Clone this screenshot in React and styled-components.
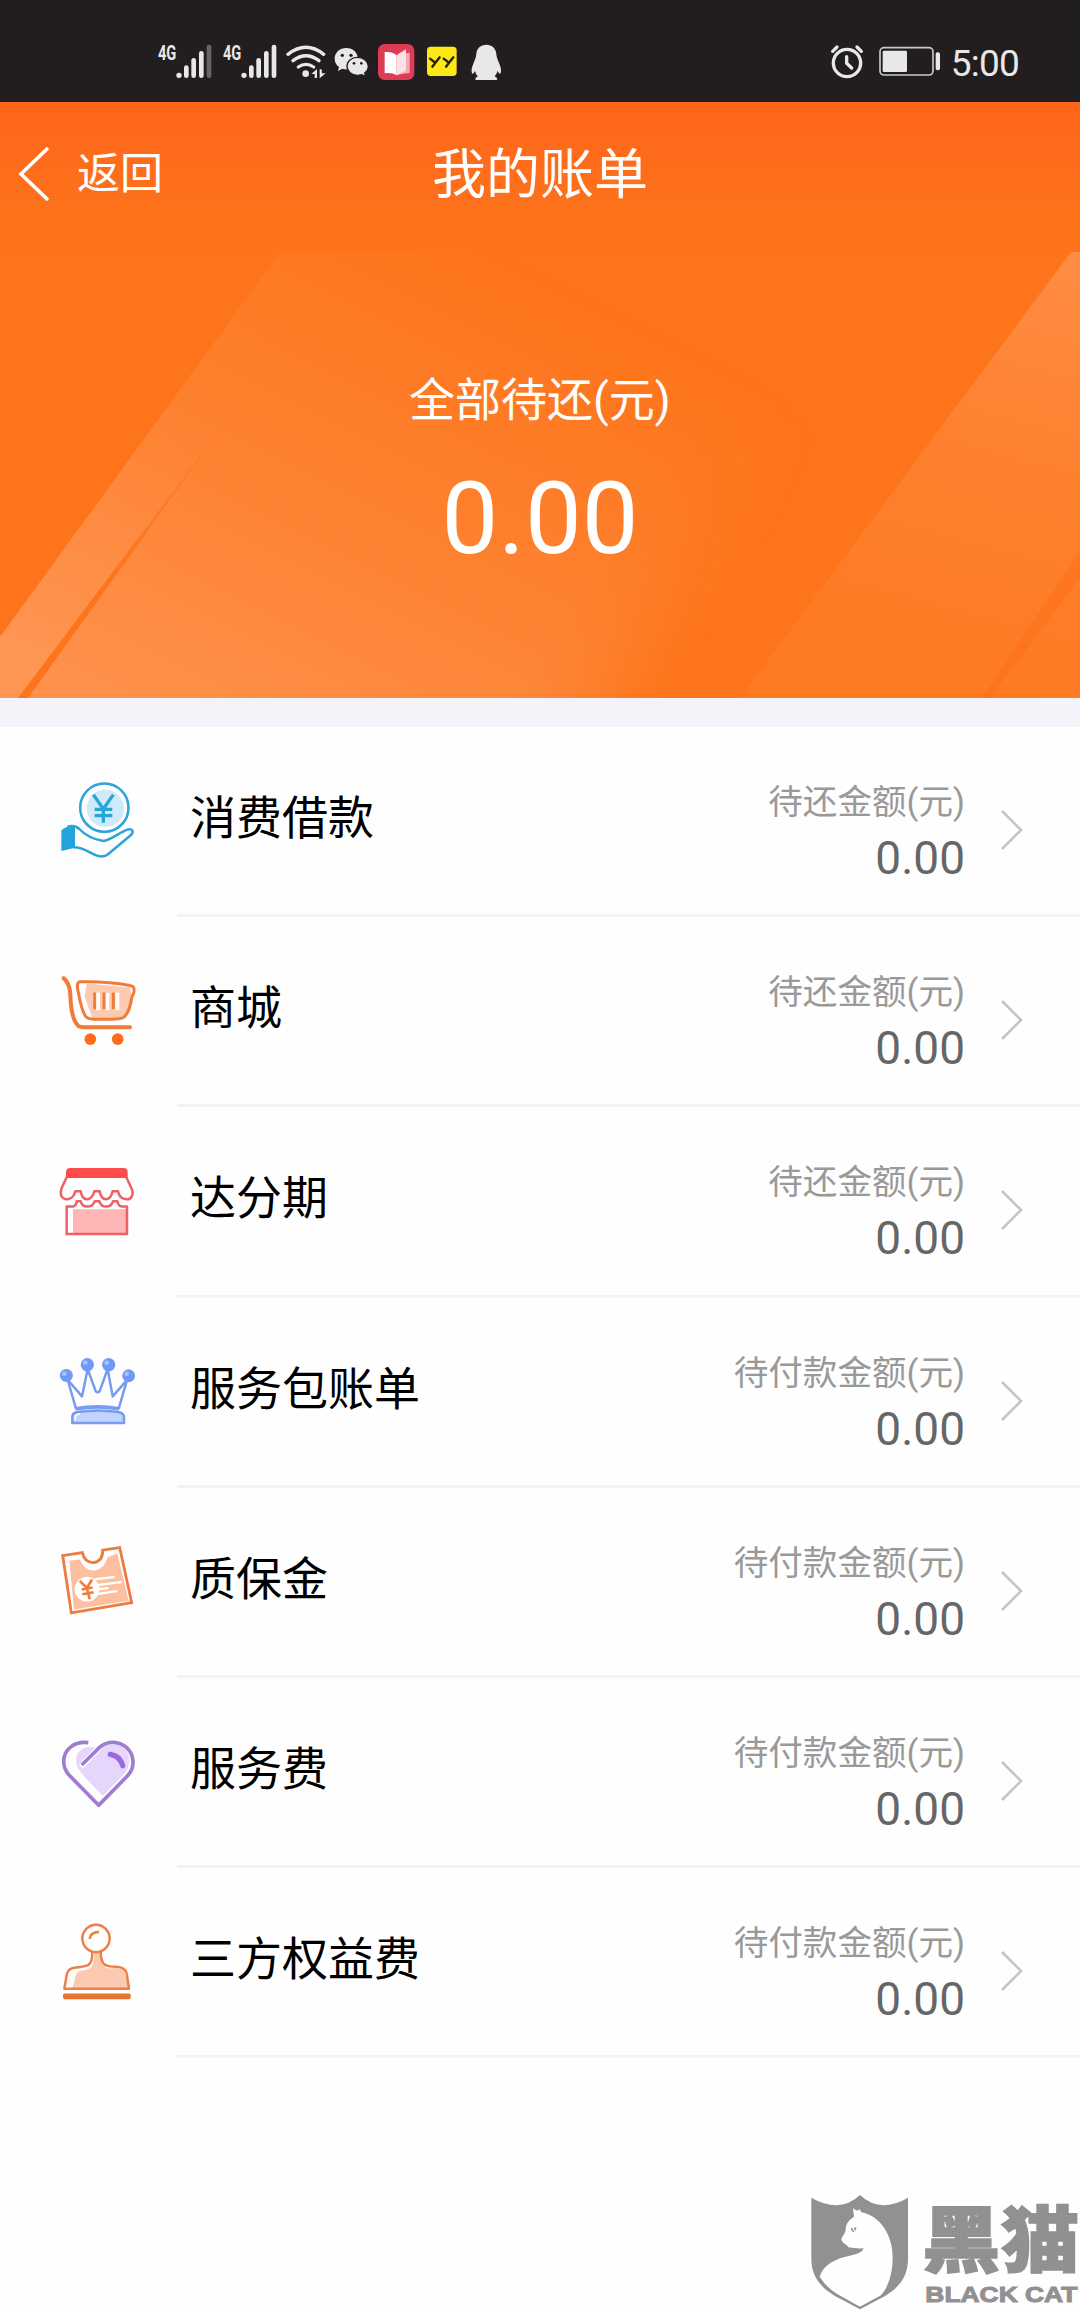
import React from "react";
import styled, { createGlobalStyle } from "styled-components";

const GlobalStyle = createGlobalStyle`
  html, body { margin: 0; padding: 0; background: #fff; }
  * { box-sizing: border-box; }
`;

const Screen = styled.div`
  display: flex;
  flex-direction: column;
  width: 1080px;
  height: 2310px;
  overflow: hidden;
  background: #fefefe;
  font-family: Roboto, "Noto Sans CJK SC", sans-serif;
  font-weight: 400;
`;

const StatusBar = styled.header`
  display: flex;
  justify-content: space-between;
  height: 102px;
  flex: none;
  padding: 42px 61px 0 157px;
  background: #221e1f;
  color: #e9e8e8;
`;

const StatusGroup = styled.div`
  display: flex;
  height: 40px;
`;

const StatusGlyph = styled.svg`
  display: block;
  height: 40px;
  width: ${(p) => p.$units / 3}px;
`;

const Clock = styled.span`
  font-size: 37px;
  line-height: 43px;
  margin-left: 10px;
  letter-spacing: -0.8px;
`;

const Hero = styled.section`
  display: grid;
  flex: none;
  height: 596px;
  overflow: hidden;
  background: linear-gradient(180deg, #ff651b 0, #fd721b 110px, #fe741a 150px, #fe741a 100%);
  color: #fff;
  & > * { grid-area: 1 / 1; }
`;

const HeroArt = styled.svg`
  display: block;
  width: 1080px;
  height: 596px;
`;

const HeroContent = styled.div`
  display: flex;
  flex-direction: column;
`;

const NavBar = styled.nav`
  display: grid;
  grid-template-columns: 1fr auto 1fr;
  align-items: center;
  height: 144px;
`;

const BackButton = styled.button`
  display: flex;
  align-items: center;
  gap: 27px;
  padding: 0 0 0 18px;
  border: 0;
  background: none;
  color: inherit;
  font: inherit;
  font-size: 43px;
  line-height: 60px;
`;

const BackIcon = styled.svg`
  display: block;
  width: 32px;
  height: 56px;
`;

const Title = styled.h1`
  margin: 0;
  padding-top: 3px;
  font-size: 54px;
  line-height: 70px;
  font-weight: 400;
`;

const Summary = styled.div`
  display: flex;
  flex-direction: column;
  align-items: center;
  padding-top: 120px;
`;

const SummaryLabel = styled.div`
  font-size: 46px;
  line-height: 68px;
`;

const SummaryAmount = styled.div`
  font-size: 101px;
  line-height: 118px;
  margin-top: 26px;
`;

const Band = styled.div`
  height: 29px;
  flex: none;
  background: #f4f3f9;
`;

const BillList = styled.ul`
  margin: 0;
  padding: 0;
  list-style: none;
`;

const BillRow = styled.li`
  display: flex;
  height: 190.2px;
`;

const IconCell = styled.div`
  width: 177px;
  padding: 49.7px 0 0 55px;
`;

const BillIcon = styled.svg`
  display: block;
  width: 85px;
  height: 85px;
`;

const BillBody = styled.div`
  display: flex;
  flex: 1;
  border-bottom: 3px solid #f3f3f3;
  padding: 0 57px 0 13px;
`;

const BillName = styled.div`
  flex: 1;
  padding-top: 57px;
  font-size: 46px;
  line-height: 68px;
  color: #000;
`;

const BillValue = styled.div`
  text-align: right;
  padding-top: 50px;
`;

const BillCaption = styled.div`
  font-size: 34.6px;
  line-height: 50px;
  color: #999;
`;

const BillAmount = styled.div`
  font-size: 46px;
  line-height: 54px;
  margin-top: 4px;
  color: #666;
`;

const Chevron = styled.svg`
  display: block;
  width: 22px;
  height: 42px;
  margin: 82px 0 0 36px;
`;

const Brand = styled.footer`
  display: flex;
  justify-content: flex-end;
  margin-top: auto;
`;

const BrandMark = styled.svg`
  display: block;
  width: 270px;
  height: 116px;
  overflow: visible;
`;

const Signal = ({ x, width, weak }) => (
  <StatusGlyph viewBox={`${x} 36 ${width} 120`} $units={width} fill="#e9e8e8">
    <text x={x + 3} y="90" fontSize="60" fontWeight="700" fontFamily="Roboto, sans-serif" textLength="55" lengthAdjust="spacingAndGlyphs">4G</text>
    <circle cx={x + 66} cy="136" r="8" />
    <rect x={x + 81} y="106" width="14" height="38" rx="7" />
    <rect x={x + 103} y="84" width="14" height="60" rx="7" />
    <rect x={x + 126} y="63" width="14" height="81" rx="7" />
    <rect x={x + 149} y="44" width="14" height="100" rx="7" fill={weak ? "#686566" : "#e9e8e8"} />
  </StatusGlyph>
);

const Status = () => (
  <StatusBar>
    <StatusGroup>
      <Signal x={50} width={196} weak />
      <Signal x={246} width={190} />
      <StatusGlyph viewBox="436 36 146 120" $units={146}>
        <g fill="none" stroke="#e9e8e8" strokeWidth="10" strokeLinecap="round">
          <path d="M442 73Q496 31 549 73" />
          <path d="M457 92Q496 62 535 92" />
          <path d="M473 111Q496 95 519 111" />
        </g>
        <g fill="#e9e8e8">
          <circle cx="495" cy="131" r="10" />
          <path d="M529 117v27h-7v-12h-10zM537 145v-27h6l1 12h11z" />
        </g>
      </StatusGlyph>
      <StatusGlyph viewBox="582 36 132 120" $units={132}>
        <g fill="#e9e8e8">
          <path d="M619 54c-20 0-35 14-35 32 0 11 5 19 13 25l-3 12 13-7c9 3 20 3 28-1 12-5 20-15 19-29-1-18-15-32-35-32z" />
          <path d="M652 82c-18 0-31 12-31 27s14 27 31 27c4 0 9-1 13-2l12 6-3-11c7-5 11-12 11-20 0-15-15-27-33-27z" stroke="#221e1f" strokeWidth="4" />
        </g>
        <g fill="#221e1f"><circle cx="607" cy="76" r="5" /><circle cx="633" cy="76" r="5" /><circle cx="642" cy="100" r="4" /><circle cx="664" cy="100" r="4" /></g>
      </StatusGlyph>
      <StatusGlyph viewBox="714 36 146 120" $units={146}>
        <rect x="714" y="42" width="109" height="108" rx="20" fill="#dc3c54" />
        <path d="M775 71L798 58V126L771 134z" fill="#f7c9d2" />
        <path d="M775 71L809 68V129L771 134z" fill="#f3a9b6" />
        <path d="M734 66Q758 64 770 76V136Q756 127 734 130z" fill="#fff" />
        <path d="M770 76L798 60V122L770 136z" fill="#fbe2e6" />
      </StatusGlyph>
      <StatusGlyph viewBox="860 36 133 120" $units={133}>
        <rect x="860" y="50" width="89" height="88" rx="11" fill="#fbe916" />
        <path d="M869 86L882 96M898 82L876 110M910 86L923 96M939 82L917 110" fill="none" stroke="#24200b" strokeWidth="7" strokeLinecap="round" />
      </StatusGlyph>
      <StatusGlyph viewBox="993 36 100 120" $units={100} fill="#e9e8e8">
        <path d="M1039 44C1056 44 1068 55 1069 72C1070 84 1074 91 1078 101C1084 115 1085 127 1080 131C1077 131 1075 126 1072 123C1071 130 1067 136 1063 139C1073 143 1074 150 1069 150H1009C1004 150 1005 143 1014 139C1010 136 1007 130 1005 123C1003 126 1001 131 998 131C993 127 994 115 1000 101C1004 91 1008 84 1009 72C1010 55 1022 44 1039 44z" />
      </StatusGlyph>
    </StatusGroup>
    <StatusGroup>
      <StatusGlyph viewBox="62 36 146 120" $units={146}>
        <g fill="none" stroke="#e9e8e8" strokeLinecap="round">
          <circle cx="113" cy="99" r="41" strokeWidth="10" />
          <path d="M112 80V100L127 114" strokeWidth="10" />
          <path d="M70 64L83 51M143 51L156 64" strokeWidth="10" />
        </g>
      </StatusGlyph>
      <StatusGlyph viewBox="208 36 186 120" $units={186}>
        <rect x="211" y="53" width="159" height="82" rx="12" fill="none" stroke="#c9c8c8" strokeWidth="5" />
        <rect x="219" y="62" width="73" height="64" rx="4" fill="#e9e8e8" />
        <rect x="378" y="67" width="13" height="54" rx="6" fill="#e9e8e8" />
      </StatusGlyph>
      <Clock>5:00</Clock>
    </StatusGroup>
  </StatusBar>
);

const Art = () => (
  <HeroArt viewBox="0 102 1080 596" aria-hidden="true">
    <defs>
      <linearGradient id="sweep" gradientUnits="userSpaceOnUse" x1="180" y1="740" x2="440" y2="220">
        <stop offset="0" stopColor="#fff" stopOpacity=".22" />
        <stop offset=".5" stopColor="#fff" stopOpacity=".1" />
        <stop offset="1" stopColor="#fff" stopOpacity="0" />
      </linearGradient>
      <linearGradient id="edge" gradientUnits="userSpaceOnUse" x1="600" y1="560" x2="715" y2="630">
        <stop offset="0" stopColor="#fff" />
        <stop offset=".3" stopColor="#fff" stopOpacity=".85" />
        <stop offset="1" stopColor="#fff" stopOpacity="0" />
      </linearGradient>
      <mask id="fade" maskUnits="userSpaceOnUse" x="0" y="102" width="1080" height="596">
        <rect x="0" y="102" width="1080" height="596" fill="url(#edge)" />
      </mask>
      <linearGradient id="wing" gradientUnits="userSpaceOnUse" x1="1080" y1="252" x2="960" y2="690">
        <stop offset="0" stopColor="#fff" stopOpacity=".18" />
        <stop offset=".5" stopColor="#fff" stopOpacity=".09" />
        <stop offset="1" stopColor="#fff" stopOpacity=".04" />
      </linearGradient>
      <linearGradient id="strip" gradientUnits="userSpaceOnUse" x1="200" y1="400" x2="0" y2="680">
        <stop offset="0" stopColor="#fff" stopOpacity="0" />
        <stop offset="1" stopColor="#fff" stopOpacity=".05" />
      </linearGradient>
      <linearGradient id="slit" gradientUnits="userSpaceOnUse" x1="232" y1="415" x2="20" y2="698">
        <stop offset="0" stopColor="#fe741a" stopOpacity=".3" />
        <stop offset=".6" stopColor="#fe741a" />
      </linearGradient>
    </defs>
    <path d="M280 252H900L720 698H0V637z" fill="url(#sweep)" mask="url(#fade)" />
    <path d="M0 637L166 408L235 412L20 698H0z" fill="url(#strip)" />
    <path d="M233 412L28 698H18z" fill="url(#slit)" />
    <path d="M1071 252H1080V698H740z" fill="url(#wing)" />
    <path d="M1080 552V578L990 698H982z" fill="#fd6f14" opacity=".55" />
  </HeroArt>
);

const icons = [
  <g fill="none" stroke="#2ba5d8" strokeWidth="7.5" strokeLinejoin="round">
    <circle cx="193" cy="142" r="72.5" />
    <circle cx="196" cy="144" r="56" fill="#cfeafb" stroke="none" />
    <path d="M160 103L190 146L220 103M190 144V187M164 147H217M164 166H217" strokeWidth="10" />
    <path d="M64 210Q84 194 105 196V262L64 272z" fill="#23a3dc" stroke="none" />
    <path d="M82 199Q104 193 118 206C136 225 165 238 190 242C212 239 238 217 262 208C278 203 283 214 272 225L205 281Q190 293 171 286C150 279 130 260 100 261" />
  </g>,
  <g fill="none" stroke="#f07c3a" strokeLinecap="round" strokeLinejoin="round">
    <path d="M140 100L270 112L276 138Q270 190 250 201Q240 206 200 206L157 204L134 140Z" fill="#fccab0" stroke="none" />
    <path d="M121 95Q200 93 270 106Q284 108 282 120Q283 130 276 139C271 168 266 190 252 201Q244 207 215 207H160Q142 207 135 196Q124 178 114 122Q108 96 121 95z" strokeWidth="9" />
    <path d="M174 128V180M202 128V180M232 128V180" stroke="#fff" strokeWidth="12" strokeLinecap="butt" />
    <path d="M164 127V177M192 127V177M220 127V177" strokeWidth="9" strokeLinecap="butt" />
    <path d="M71 84C85 96 90 111 91 134C92 170 97 211 115 227Q118 231 132 231H270" strokeWidth="12" />
    <g fill="#ff6a1c" stroke="none"><circle cx="151" cy="267" r="17.5" /><circle cx="233" cy="267" r="17.5" /></g>
  </g>,
  <g fill="none" stroke="#ed6063" strokeWidth="7.5" strokeLinejoin="round">
    <path d="M99 208H258V280H99z" fill="#ffb4b6" stroke="none" />
    <path d="M80 112L66 142Q59 159 65 170Q72 180 86 177Q101 174 106 154H122Q126 178 141 178Q157 177 163 154H179Q183 178 198 178Q213 177 218 154H234Q239 177 256 177Q271 181 276 168Q281 158 273 142L259 112" />
    <path d="M80 200H100Q109 197 110 184H122Q126 200 141 200Q159 200 164 184H178Q183 200 198 200Q214 200 219 184H232Q236 200 246 200H261V282H80z" />
    <path d="M91 84H251Q263 84 263 97V114H78V97Q78 84 91 84z" fill="#fe4b4c" stroke="none" />
  </g>,
  <g fill="none" stroke="#779bee" strokeWidth="7.5" strokeLinejoin="round">
    <path d="M108 237L83 150L126 200L143 118L167 184Q173 191 179 184L203 118L218 200L261 151L236 237" />
    <path d="M106 237Q172 226 238 237" strokeWidth="11" />
    <path d="M97 280V261Q98 249 112 247Q174 237 235 247Q250 250 252 261V280z" fill="#c2d4fd" />
    <path d="M105 272Q103 253 120 252" stroke="#fff" strokeWidth="5" />
    <g fill="#6e99fb" stroke="#779bee" strokeWidth="4"><circle cx="79" cy="137" r="17.5" /><circle cx="142" cy="105" r="18" /><circle cx="206" cy="105" r="18" /><circle cx="266" cy="138" r="17.5" /></g>
    <g fill="#a8c1ff" stroke="none"><circle cx="73" cy="132" r="7" /><circle cx="136" cy="99" r="7" /><circle cx="200" cy="99" r="7" /><circle cx="260" cy="132" r="7" /></g>
  </g>,
  <g fill="none">
    <path d="M88 124L120 120Q132 155 166 153Q193 147 203 113L232 101L266 244L102 270z" fill="#fcc0a0" />
    <path d="M68 108L127 99Q134 130 161 129Q189 124 188 92L239 84L275 249L94 280z" stroke="#ec7c40" strokeWidth="8.5" />
    <circle cx="141" cy="209" r="37" fill="#fff" />
    <path d="M168 179L221 173M176 196L243 188M178 209L203 206M176 223L229 215" stroke="#fff" strokeWidth="7" strokeLinecap="round" />
    <path d="M119 184L141 205L156 180M141 205L149 239M125 210L158 204M127 224L161 218" stroke="#ec7c40" strokeWidth="8" />
  </g>,
  <g fill="none" stroke="#9f7cd2" strokeLinecap="round" strokeLinejoin="round">
    <path d="M189 256Q120 190 110 166C103 135 118 112 148 109Q164 108 174 116Q190 99 215 99C260 99 283 145 258 184Q250 194 189 256z" fill="#e6d6fc" stroke="none" />
    <path d="M128 163L176 113" stroke="#fff" strokeWidth="18" />
    <path d="M145 97C100 92 72 119 71 152Q71 176 87 194L176 285L264 195C287 169 282 132 260 112C235 91 204 91 181 109L125 164" strokeWidth="11" strokeLinecap="butt" />
    <path d="M211 132Q240 136 248 166" stroke="#9a69dc" strokeWidth="16" />
  </g>,
  <g fill="none" stroke="#ee7f47" strokeWidth="7.5" strokeLinejoin="round">
    <path d="M97 265L108 224Q112 212 125 211Q152 208 158 195L164 158H180L184 184Q188 202 208 205Q240 200 253 214L266 267z" fill="#fccab1" stroke="none" />
    <circle cx="168" cy="115" r="41" />
    <path d="M149 116Q151 96 177 95" strokeWidth="8" />
    <path d="M157 154Q157 186 146 194Q136 199 108 202Q85 204 81 220L73 266H267L260 220Q256 202 230 200Q196 200 189 188Q182 176 182 154" />
    <rect x="69" y="280" width="203" height="17" rx="5" fill="#e97432" stroke="none" />
  </g>,
];

const bills = [
  ["消费借款", "待还金额(元)"],
  ["商城", "待还金额(元)"],
  ["达分期", "待还金额(元)"],
  ["服务包账单", "待付款金额(元)"],
  ["质保金", "待付款金额(元)"],
  ["服务费", "待付款金额(元)"],
  ["三方权益费", "待付款金额(元)"],
];

export default function App() {
  return (
    <Screen>
      <GlobalStyle />
      <Status />
      <Hero>
        <Art />
        <HeroContent>
          <NavBar>
            <BackButton>
              <BackIcon viewBox="0 0 32 56" fill="none" stroke="#fff" strokeWidth="3.6">
                <path d="M30 2L3 28L30 54" />
              </BackIcon>
              返回
            </BackButton>
            <Title>我的账单</Title>
          </NavBar>
          <Summary>
            <SummaryLabel>全部待还(元)</SummaryLabel>
            <SummaryAmount>0.00</SummaryAmount>
          </Summary>
        </HeroContent>
      </Hero>
      <Band />
      <BillList>
        {bills.map(([name, caption], i) => (
          <BillRow key={name}>
            <IconCell>
              <BillIcon viewBox={`45 ${50 + i * 0.6} 255 255`}>{icons[i]}</BillIcon>
            </IconCell>
            <BillBody>
              <BillName>{name}</BillName>
              <BillValue>
                <BillCaption>{caption}</BillCaption>
                <BillAmount>0.00</BillAmount>
              </BillValue>
              <Chevron viewBox="0 0 22 42" fill="none" stroke="#c4c4c4" strokeWidth="2.6">
                <path d="M1 2L20 21L1 40" />
              </Chevron>
            </BillBody>
          </BillRow>
        ))}
      </BillList>
      <Brand>
        <BrandMark viewBox="90 72 810 348" fill="#929091">
          <path d="M94 83Q180 132 240 75Q300 132 384 83V265C384 320 360 350 315 378L240 418L165 378C120 350 94 320 94 265z" />
          <path d="M219 115L231 122L239 118L244 127C300 137 338 195 338 262C338 310 325 352 303 376L240 410L170 371Q137 350 119 320C130 285 165 266 215 256Q246 250 251 235Q225 236 205 232C200 222 184 219 184 208C187 197 196 192 197 178C198 160 207 149 222 140z" fill="#fefefe" />
          <path d="M212 173Q221 176 229 171Q229 184 220 187Q214 184 212 173z" />
          <path d="M219 174L224 184" stroke="#fefefe" strokeWidth="4" />
          <text x="426" y="288" fontFamily="'Noto Sans CJK SC', sans-serif" fontSize="214" fontWeight="900" textLength="472" lengthAdjust="spacingAndGlyphs" stroke="#929091" strokeWidth="4">黑猫</text>
          <text x="436" y="396" fontFamily="'Liberation Sans', Arial, sans-serif" fontSize="68" fontWeight="700" textLength="456" lengthAdjust="spacingAndGlyphs" stroke="#929091" strokeWidth="3">BLACK CAT</text>
        </BrandMark>
      </Brand>
    </Screen>
  );
}
